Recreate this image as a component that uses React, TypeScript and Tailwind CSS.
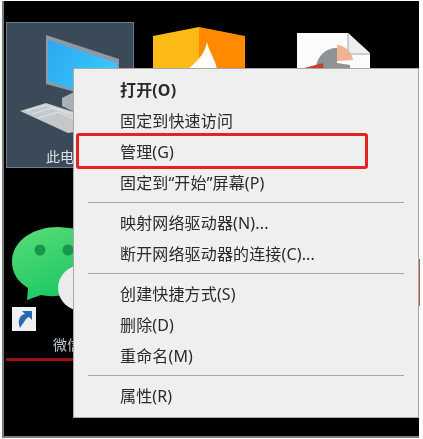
const FONT = 'font-["Noto_Sans","Noto_Sans_CJK_SC",sans-serif]';

type Item = { label: string; bold?: boolean; marked?: boolean } | 'sep';

const MENU: Item[] = [
  { label: '打开(O)', bold: true },
  { label: '固定到快速访问' },
  { label: '管理(G)', marked: true },
  { label: '固定到“开始”屏幕(P)' },
  'sep',
  { label: '映射网络驱动器(N)...' },
  { label: '断开网络驱动器的连接(C)...' },
  'sep',
  { label: '创建快捷方式(S)' },
  { label: '删除(D)' },
  { label: '重命名(M)' },
  'sep',
  { label: '属性(R)' },
];

// the icon drawings use page coordinates through their viewBox
function PcIcon() {
  return (
    <svg className="block" width="126" height="124" viewBox="7 23 126 124">
      <defs>
        <linearGradient id="screen" x1="0" y1="0" x2="1" y2="0.6">
          <stop offset="0" stopColor="#2aa8f0" />
          <stop offset="1" stopColor="#3ccafc" />
        </linearGradient>
      </defs>
      <path d="M46 35 L119 59 L119 104 L46 84 Z" fill="#8d99a3" />
      <path d="M48 40 L117 63 L117 104 L48 81 Z" fill="url(#screen)" />
      <path d="M62 98 L74 92 L74 112 L62 106 Z" fill="#a9b1b8" />
      <path d="M20 111 L46 103 L74 112 L74 132 L68 133 Z" fill="#c4c8cb" />
      <path d="M26 111 L46 105 L74 114 M32 114 L52 108 L74 116 M38 118 L58 112 L74 119" stroke="#e4e6e7" strokeWidth="1" fill="none" />
    </svg>
  );
}

function OfficeIcon() {
  return (
    <svg className="mt-[2px] ml-[16px] block" width="100" height="46" viewBox="150 24 100 46">
      <path d="M153 36 L199 27 L199 70 L153 70 Z" fill="#fdb915" />
      <path d="M199 27 L245 36 L245 70 L199 70 Z" fill="#ff8a00" />
      <path d="M207 42 C209 52 216 60 217 70 L187 70 C196 62 204 56 207 42 Z" fill="#fffdf8" />
    </svg>
  );
}

function DocIcon() {
  return (
    <svg className="mt-[8px] ml-[45px] block" width="78" height="40" viewBox="295 30 78 40">
      <path d="M297 33 L348 33 L370 53 L370 70 L297 70 Z" fill="#fbfbfb" />
      <path d="M348 33 L348 54 L370 54 Z" fill="#eceef0" />
      <path d="M348 33 L348 54 L370 54" fill="none" stroke="#a2a6ab" strokeWidth="1" />
      <path d="M316 70 C316 56 326 48 337 48 L337 63 L350 65 L350 70 Z" fill="#8f9398" />
      <path d="M337 45 C346 46 352 52 353 60 L337 61 Z" fill="#eeb393" />
      <path d="M297 70 L323 63 L324 70 Z" fill="#c5402c" />
    </svg>
  );
}

function WechatIcon() {
  return (
    <svg className="mt-[54px] ml-[4px] block" width="70" height="112" viewBox="10 222 70 112">
      <defs>
        <linearGradient id="bubble" x1="0" y1="0" x2="0.4" y2="1">
          <stop offset="0" stopColor="#5bdc79" />
          <stop offset="1" stopColor="#20c963" />
        </linearGradient>
      </defs>
      <path d="M12 262 C12 240 34 227 58 227 L80 229 L80 290 C64 297 50 297 41 295 L27 300 L28 288 C18 282 12 273 12 262 Z" fill="url(#bubble)" />
      <circle cx="40" cy="250" r="5.5" fill="#18964c" />
      <circle cx="68" cy="250" r="5.5" fill="#18964c" />
      <ellipse cx="82" cy="288" rx="24" ry="23" fill="#ebecec" />
      <rect x="12" y="307" width="24" height="24" fill="#eef0f2" />
      <path d="M20 328 C17 320 20 315 25 314 L22 311 L32 311 L32 320 L29 317 C26 318 24 322 20 328 Z" fill="#2a68ad" />
    </svg>
  );
}

function Menu() {
  return (
    <div className="absolute left-[73px] top-[68px] w-[346px] border border-[#a8a8a8] bg-[#efefef] pt-[5px] pb-[6px]">
      {MENU.map((item, i) =>
        item === 'sep' ? (
          <div key={i} className="flex h-[9px] items-center px-[14px]">
            <div className="h-[1.5px] w-full bg-[#a6a6a6]" />
          </div>
        ) : (
          <div
            key={i}
            className={`relative flex h-[31px] items-center pl-[46px] text-[16px] tracking-[0.15px] text-[#2a2a2a] ${item.bold ? 'font-bold' : ''}`}
          >
            {item.label}
            {item.marked && (
              <div className="absolute left-[2px] top-[-3px] h-[36px] w-[292px] rounded-[3px] border-[3px] border-[#e3231d]" />
            )}
          </div>
        ),
      )}
    </div>
  );
}

export default function App() {
  return (
    <div className={`relative h-[439px] w-[423px] overflow-hidden bg-white pl-[2px] pr-[4px] pt-[1px] pb-px blur-[0.5px] ${FONT}`}>
      <div className="h-full border-b-2 border-l-2 border-[#7d7d7d] bg-black pl-[2px] pt-[21px]">
        <div className="flex items-start">
          <div className="h-[146px] w-[128px] border border-[#6c7c8a] bg-[#3a4a59]">
            <PcIcon />
            <div className="pl-[39px] text-[14px] leading-[20px] text-[#dfe3e6]">此电脑</div>
          </div>
          <OfficeIcon />
          <DocIcon />
        </div>
        <WechatIcon />
        <div className="mt-px ml-[47px] text-[14px] leading-[20px] text-[#bcc6cc]">微信</div>
        <div className="mt-[3px] h-[3px] w-[68px] bg-[#9a0f14]" />
      </div>
      <Menu />
      <div className="absolute left-[419px] top-[259px] h-[47px] w-px bg-[#a8613f]" />
    </div>
  );
}
